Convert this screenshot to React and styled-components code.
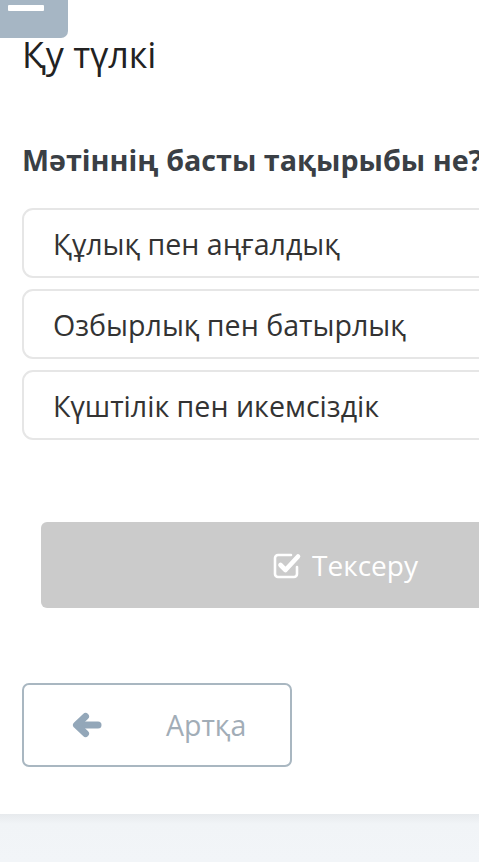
import React from "react";
import styled, { createGlobalStyle } from "styled-components";

const GlobalStyle = createGlobalStyle`
  html, body {
    margin: 0;
    padding: 0;
    background: #fff;
    overflow: hidden;
  }
  body {
    font-family: "Open Sans", "Noto Sans", sans-serif;
  }
`;

const options = [
  "Құлық пен аңғалдық",
  "Озбырлық пен батырлық",
  "Күштілік пен икемсіздік",
];

const Page = styled.div`
  width: 479px;
  height: 862px;
  overflow: hidden;
  display: flex;
  flex-direction: column;
`;

const Main = styled.div`
  height: 814px;
  width: 680px;
  display: flex;
  flex-direction: column;
`;

const Tab = styled.div`
  width: 68px;
  height: 38px;
  background: #a6b6c4;
  border-bottom-right-radius: 7px;
  box-sizing: border-box;
  padding: 5px 0 0 8px;
`;

const TabBar = styled.div`
  width: 36px;
  height: 6px;
  background: #fff;
  border-radius: 1px;
`;

const Title = styled.h1`
  margin: -1px 0 0 22px;
  font-size: 36px;
  line-height: 36px;
  font-weight: 400;
  color: #222;
`;

const Question = styled.h2`
  margin: 73px 0 0 22px;
  font-size: 28.7px;
  line-height: 28px;
  font-weight: 700;
  color: #3a3f45;
  white-space: nowrap;
`;

const OptionList = styled.div`
  margin: 34px 0 0 22px;
  display: flex;
  flex-direction: column;
  gap: 11px;
`;

const Option = styled.div`
  height: 70px;
  box-sizing: border-box;
  border: 2px solid #e6e6e6;
  border-radius: 11px;
  display: flex;
  align-items: center;
  padding-left: 29px;
  font-size: 28.6px;
  color: #333;
`;

const CheckButton = styled.div`
  margin: 82px 0 0 41px;
  width: 608px;
  height: 86px;
  background: #cbcbcb;
  border-radius: 6px;
  display: flex;
  align-items: center;
  justify-content: center;
  gap: 10px;
  color: #fff;
  font-size: 28px;
  svg {
    width: 30px;
    height: 30px;
  }
`;

const BackButton = styled.div`
  margin: 75px 0 0 22px;
  width: 270px;
  height: 84px;
  box-sizing: border-box;
  border: 2px solid #a9b7c1;
  border-radius: 7px;
  display: flex;
  align-items: center;
  padding-left: 48px;
  gap: 64px;
  color: #a2adb7;
  font-size: 28.5px;
  svg {
    width: 30px;
    height: 26px;
  }
`;

const Footer = styled.div`
  flex: 1;
  background: linear-gradient(#e7eaed, #f1f4f7 10px, #f2f5f8);
`;

const CheckSquareIcon = () => (
  <svg viewBox="0 0 30 30" fill="none" stroke="#fff" strokeLinecap="round" strokeLinejoin="round">
    <path d="M19 5H6a3 3 0 0 0-3 3v16a3 3 0 0 0 3 3h16a3 3 0 0 0 3-3v-7" strokeWidth="2.6" />
    <path d="M8.5 15l5 5L26 6.5" strokeWidth="4.6" />
  </svg>
);

const ArrowLeftIcon = () => (
  <svg viewBox="0 0 30 26" fill="none" stroke="#93a7b9" strokeLinecap="round" strokeLinejoin="round" strokeWidth="7">
    <path d="M26 13H6" />
    <path d="M13.5 4.5L4.5 13l9 8.5" />
  </svg>
);

export default function App() {
  return (
    <Page>
      <GlobalStyle />
      <Main>
        <Tab>
          <TabBar />
        </Tab>
        <Title>Қу түлкі</Title>
        <Question>Мәтіннің басты тақырыбы не?</Question>
        <OptionList>
          {options.map((o) => (
            <Option key={o}>{o}</Option>
          ))}
        </OptionList>
        <CheckButton>
          <CheckSquareIcon />
          <span>Тексеру</span>
        </CheckButton>
        <BackButton>
          <ArrowLeftIcon />
          <span>Артқа</span>
        </BackButton>
      </Main>
      <Footer />
    </Page>
  );
}
